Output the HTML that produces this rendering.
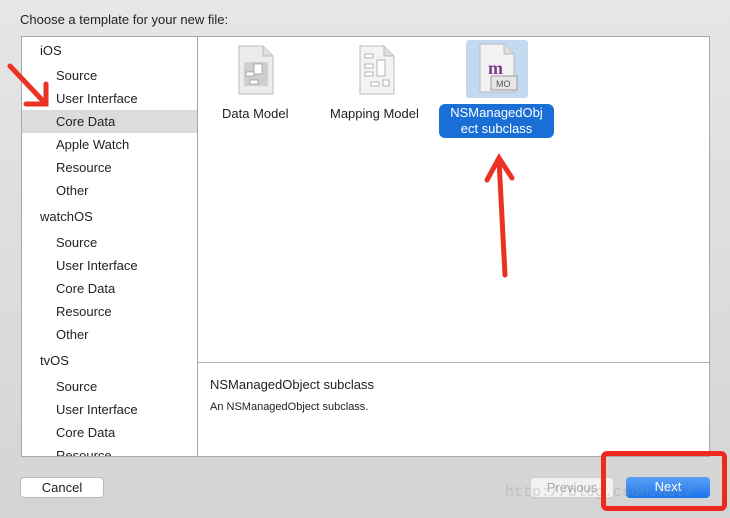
<!DOCTYPE html>
<html><head><meta charset="utf-8"><style>
*{margin:0;padding:0;box-sizing:border-box}
body{width:730px;height:518px;overflow:hidden;position:relative;font-family:"Liberation Sans",sans-serif;background:linear-gradient(#e6e6e6,#d4d4d4);color:#222}
.t{position:absolute;font-size:13px}
#side{position:absolute;left:21px;top:36px;width:177px;height:421px;background:#fff;border:1px solid #a8a8a8;overflow:hidden}
#main{position:absolute;left:197px;top:36px;width:513px;height:421px;background:#fff;border:1px solid #a8a8a8}
.r{position:absolute;left:0;width:176px;height:23px;font-size:13px;line-height:23px}
.h{padding-left:18px}.s{padding-left:34px}
.sel{background:#dcdcdc}
.btn{position:absolute;height:21px;border-radius:4px;font-size:13px;text-align:center;line-height:20px}
</style></head><body>
<div class="t" style="left:20px;top:12px">Choose a template for your new file:</div>
<div id="side">
<div class="r h" style="top:2px">iOS</div>
<div class="r s" style="top:27px">Source</div>
<div class="r s" style="top:50px">User Interface</div>
<div class="r s sel" style="top:73px">Core Data</div>
<div class="r s" style="top:96px">Apple Watch</div>
<div class="r s" style="top:119px">Resource</div>
<div class="r s" style="top:142px">Other</div>
<div class="r h" style="top:168px">watchOS</div>
<div class="r s" style="top:194px">Source</div>
<div class="r s" style="top:217px">User Interface</div>
<div class="r s" style="top:240px">Core Data</div>
<div class="r s" style="top:263px">Resource</div>
<div class="r s" style="top:286px">Other</div>
<div class="r h" style="top:312px">tvOS</div>
<div class="r s" style="top:338px">Source</div>
<div class="r s" style="top:361px">User Interface</div>
<div class="r s" style="top:384px">Core Data</div>
<div class="r s" style="top:407px">Resource</div>
</div>
<div id="main">
<div style="position:absolute;left:0;right:0;top:325px;border-top:1px solid #b0b0b0"></div>
<div class="t" style="left:12px;top:340px">NSManagedObject subclass</div>
<div class="t" style="left:12px;top:364px;font-size:11px">An NSManagedObject subclass.</div>
</div>
<!-- icons -->
<svg style="position:absolute;left:236px;top:44px" width="40" height="52"><path d="M3 2h24l10 10v38H3z" fill="#ececec" stroke="#bbb"/><path d="M27 2v10h10" fill="#ddd" stroke="#bbb"/><rect x="8" y="18" width="24" height="24" fill="#cfcfcf"/><rect x="18" y="20" width="8" height="10" fill="#fff" stroke="#888" stroke-width=".6"/><rect x="10" y="28" width="8" height="4" fill="#fff" stroke="#888" stroke-width=".6"/><rect x="14" y="36" width="8" height="4" fill="#fff" stroke="#888" stroke-width=".6"/></svg>
<svg style="position:absolute;left:357px;top:44px" width="40" height="52"><path d="M3 2h24l10 10v38H3z" fill="#f3f3f3" stroke="#bbb"/><path d="M27 2v10h10" fill="#ddd" stroke="#bbb"/><g fill="#fff" stroke="#888" stroke-width=".6"><rect x="8" y="10" width="8" height="4"/><rect x="8" y="20" width="8" height="4"/><rect x="8" y="28" width="8" height="4"/><rect x="20" y="16" width="8" height="16"/><rect x="14" y="38" width="8" height="4"/><rect x="26" y="36" width="6" height="6"/></g></svg>
<div style="position:absolute;left:466px;top:40px;width:62px;height:58px;background:#c3d9f0;border-radius:3px"></div>
<svg style="position:absolute;left:475px;top:42px" width="46" height="54"><path d="M5 2h24l10 10v38H5z" fill="#f2f2f2" stroke="#bbb"/><path d="M29 2v10h10" fill="#ddd" stroke="#bbb"/><text x="13" y="32" font-family="Liberation Serif" font-weight="bold" font-size="18" fill="#7a3b8a">m</text><rect x="16" y="34" width="26" height="14" fill="#e6e6e6" stroke="#999"/><text x="21" y="45" font-size="9" fill="#555" font-family="Liberation Sans">MO</text></svg>
<div class="t" style="left:222px;top:106px">Data Model</div>
<div class="t" style="left:330px;top:106px">Mapping Model</div>
<div style="position:absolute;left:439px;top:104px;width:115px;height:34px;background:#1a6fd6;border-radius:6px;color:#fff;font-size:13px;text-align:center;line-height:16px;padding-top:1px">NSManagedObj<br>ect subclass</div>
<!-- buttons -->
<div class="btn" style="left:20px;top:477px;width:84px;background:#fff;border:1px solid #b8b8b8">Cancel</div>
<div class="btn" style="left:530px;top:477px;width:84px;background:#f2f2f2;border:1px solid #cfcfcf;color:#aaa">Previous</div>
<div class="btn" style="left:626px;top:477px;width:84px;background:linear-gradient(#5aa2f7,#1c74ea);color:#fff">Next</div>
<div class="t" style="left:505px;top:484px;font-family:'Liberation Mono',monospace;font-size:15px;color:rgba(150,150,150,.35)">http://blog.csdn.net/</div>
<!-- red annotations -->
<div style="position:absolute;left:601px;top:451px;width:126px;height:60px;border:5px solid #ee2a1f;border-radius:6px"></div>
<svg style="position:absolute;left:0;top:0" width="730" height="518"><g stroke="#ea3323" stroke-width="5" stroke-linecap="round" fill="none"><path d="M10 66 L44 102"/><path d="M26 104 L46 104 L46 84"/><path d="M505 275 L499 160"/><path d="M487 180 L499 158 L512 178"/></g></svg>
</body></html>
